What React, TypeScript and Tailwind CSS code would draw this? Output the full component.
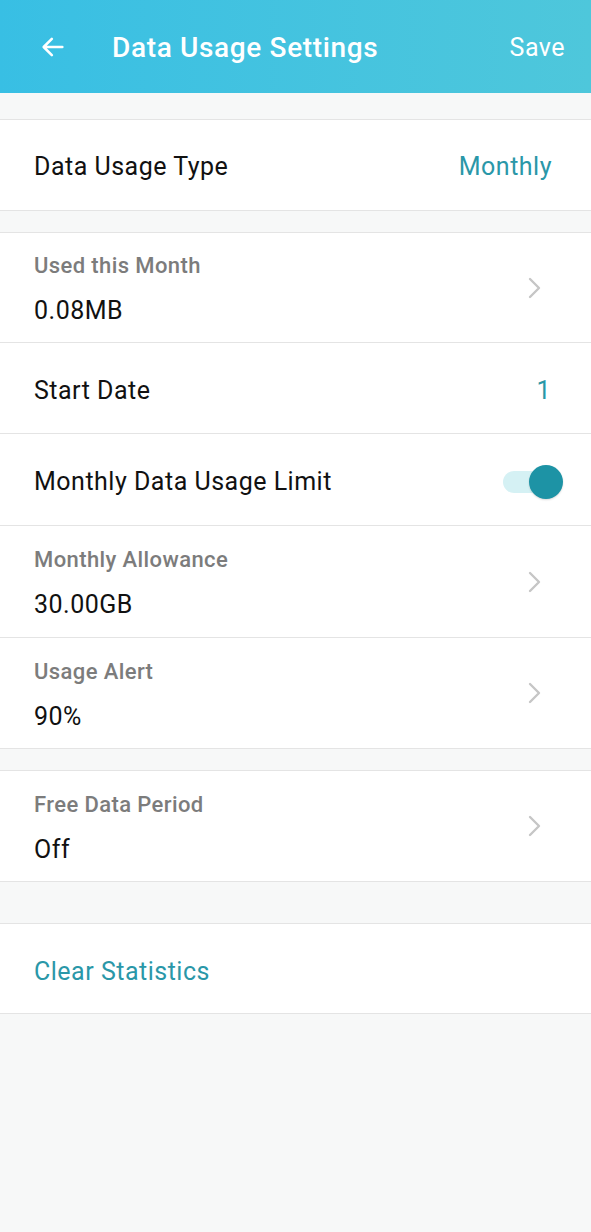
import React from "react";

const teal = "text-[#2a97a8]";
const main = "text-[25px] tracking-[0.5px]";

function Chevron() {
  return (
    <svg width="16" height="24" viewBox="0 0 16 24" className="mr-[48px]">
      <path d="M3 3 L12 12 L3 21" fill="none" stroke="#c6c6c6" strokeWidth="2.4" strokeLinecap="round" strokeLinejoin="round" />
    </svg>
  );
}

function TwoLineRow({ label, value, last, tall }: { label: string; value: string; last?: boolean; tall?: boolean }) {
  return (
    <div className={`flex items-center justify-between pl-[34px] ${tall ? "h-[112px]" : "h-[110px]"} ${last ? "" : "border-b border-[#e4e4e4]"}`}>
      <div className="flex flex-col pt-[4px]">
        <span className="text-[22px] tracking-[0.4px] font-medium text-[#7c7c7c] leading-[26px]">{label}</span>
        <span className={`${main} text-[#111] leading-[30px] mt-[17px]`}>{value}</span>
      </div>
      <Chevron />
    </div>
  );
}

export default function App() {
  return (
    <div className="w-[591px] h-[1232px] bg-[#f7f8f8] overflow-hidden" style={{ fontFamily: "Roboto, 'Noto Sans', sans-serif" }}>
      <header className="h-[93px] flex items-center pt-[3px] bg-gradient-to-r from-[#38bfe4] to-[#4ec7db] text-white">
        <svg width="28" height="28" viewBox="0 0 24 24" className="ml-[39px] -mt-[3px]">
          <path d="M20 12 H4.5 M11 5 L4 12 L11 19" fill="none" stroke="white" strokeWidth="2.2" strokeLinecap="round" strokeLinejoin="round" />
        </svg>
        <h1 className="ml-[45px] text-[28px] font-medium tracking-[0.65px]">Data Usage Settings</h1>
        <span className="ml-auto mr-[26px] text-[25px] tracking-[0.5px]">Save</span>
      </header>

      <section className="mt-[26px] bg-white border-y border-[#e4e4e4]">
        <div className="h-[90px] flex items-center justify-between pl-[34px] pr-[39px] pt-[4px]">
          <span className={`${main} text-[#111]`}>Data Usage Type</span>
          <span className={`${main} ${teal}`}>Monthly</span>
        </div>
      </section>

      <section className="mt-[21px] bg-white border-y border-[#e4e4e4]">
        <TwoLineRow label="Used this Month" value="0.08MB" />
        <div className="h-[91px] flex items-center justify-between pl-[34px] pr-[40px] pt-[6px] border-b border-[#e4e4e4]">
          <span className={`${main} text-[#111]`}>Start Date</span>
          <span className={`${main} ${teal}`}>1</span>
        </div>
        <div className="h-[92px] flex items-center justify-between pl-[34px] pr-[28px] pt-[5px] border-b border-[#e4e4e4]">
          <span className={`${main} text-[#111]`}>Monthly Data Usage Limit</span>
          <div className="relative w-[60px] h-[34px] flex items-center">
            <div className="w-[50px] h-[22px] rounded-full bg-[#d5f1f4]" />
            <div className="absolute right-0 top-0 w-[34px] h-[34px] rounded-full bg-[#1d93a5] shadow-[0_1px_2px_rgba(0,0,0,0.15)]" />
          </div>
        </div>
        <TwoLineRow label="Monthly Allowance" value="30.00GB" tall />
        <TwoLineRow label="Usage Alert" value="90%" last />
      </section>

      <section className="mt-[21px] bg-white border-y border-[#e4e4e4]">
        <TwoLineRow label="Free Data Period" value="Off" last />
      </section>

      <section className="mt-[41px] bg-white border-y border-[#e4e4e4]">
        <div className="h-[89px] flex items-center pl-[34px] pt-[6px]">
          <span className={`${main} ${teal}`}>Clear Statistics</span>
        </div>
      </section>
    </div>
  );
}
